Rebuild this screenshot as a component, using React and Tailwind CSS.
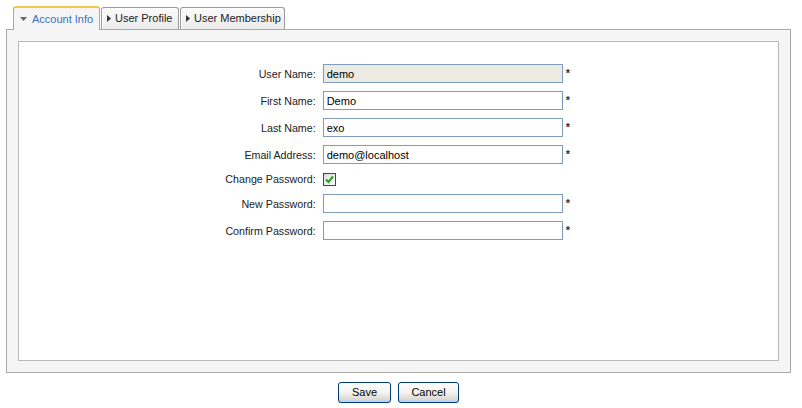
export default function App() {
  const rows = [
    { label: "User Name:", value: "demo", disabled: true, required: true },
    { label: "First Name:", value: "Demo", required: true },
    { label: "Last Name:", value: "exo", required: true },
    { label: "Email Address:", value: "demo@localhost", required: true },
  ];

  return (
    <div className="w-[802px] h-[408px] bg-white font-['Liberation_Sans',Arial,sans-serif] text-[11px] text-[#222]">
      {/* Tabs */}
      <div className="flex items-end gap-[1px] pl-[13px] pt-[5px] h-[29px] relative z-10">
        <div className="h-[24px] w-[87px] -mb-px flex items-center gap-[5px] pl-[6px] rounded-t-[3px] border border-b-0 border-[#a9a9a9] border-t-2 border-t-[#f2c84b] bg-[#f5f5f5] text-[#3d70c0]">
          <svg width="7" height="4" viewBox="0 0 7 4">
            <path d="M0 0 H7 L3.5 4 Z" fill="#666" />
          </svg>
          <span>Account Info</span>
        </div>
        <div className="h-[22px] w-[78px] flex items-center gap-[4px] pl-[5px] rounded-t-[3px] border border-b-0 border-[#9a9a9a] bg-gradient-to-b from-[#fafafa] to-[#ebebeb] shadow-[inset_1px_1px_0_#fff]">
          <svg width="4" height="7" viewBox="0 0 4 7">
            <path d="M0 0 V7 L4 3.5 Z" fill="#333" />
          </svg>
          <span>User Profile</span>
        </div>
        <div className="h-[22px] w-[105px] flex items-center gap-[4px] pl-[5px] rounded-t-[3px] border border-b-0 border-[#9a9a9a] bg-gradient-to-b from-[#fafafa] to-[#ebebeb] shadow-[inset_1px_1px_0_#fff]">
          <svg width="4" height="7" viewBox="0 0 4 7">
            <path d="M0 0 V7 L4 3.5 Z" fill="#333" />
          </svg>
          <span>User Membership</span>
        </div>
      </div>

      {/* Outer panel */}
      <div className="mx-[6px] w-[785px] h-[344px] border border-[#a9a9a9] bg-[#f5f5f5] p-[11px]">
        <div className="h-[320px] border border-[#b8b8b8] bg-white pt-[22px] flex justify-center">
          <div className="grid grid-cols-[auto_240px_auto] gap-x-[7px] gap-y-[8px] items-center ml-[2px] h-fit leading-[14px]">
            {rows.map((r) => (
              <Row key={r.label} label={r.label} required={r.required}>
                <input
                  readOnly
                  value={r.value}
                  className={
                    "h-[19px] w-[240px] border border-[#7f9db9] px-[3px] text-[11px] text-black outline-none font-['Liberation_Sans',Arial,sans-serif] " +
                    (r.disabled ? "bg-[#ebebe4]" : "bg-white")
                  }
                />
              </Row>
            ))}
            <Row label="Change Password:">
              <div className="h-[14px] flex items-center">
                <div className="w-[13px] h-[13px] border border-[#1c5180] bg-gradient-to-br from-[#dcdcd7] to-white flex items-center justify-center">
                  <svg width="9" height="9" viewBox="0 0 9 9">
                    <path d="M1 4.5 L3.5 7 L8 1.5" fill="none" stroke="#21a121" strokeWidth="2" />
                  </svg>
                </div>
              </div>
            </Row>
            <Row label="New Password:" required>
              <input readOnly type="password" className="h-[19px] w-[240px] border border-[#7f9db9] bg-white outline-none" />
            </Row>
            <Row label="Confirm Password:" required>
              <input readOnly type="password" className="h-[19px] w-[240px] border border-[#7f9db9] bg-white outline-none" />
            </Row>
          </div>
        </div>
      </div>

      {/* Buttons */}
      <div className="flex justify-center gap-[7px] mt-[9px] pr-[5px]">
        <button className="h-[21px] w-[53px] rounded-[3px] border border-[#003c74] bg-gradient-to-b from-white via-[#f3f3ef] to-[#d6d0c5] shadow-[inset_0_-2px_0_#c2d3f4] text-[11px] text-black">
          Save
        </button>
        <button className="h-[21px] w-[61px] rounded-[3px] border border-[#003c74] bg-gradient-to-b from-white via-[#f3f3ef] to-[#d6d0c5] shadow-[inset_0_-2px_0_#c2d3f4] text-[11px] text-black">
          Cancel
        </button>
      </div>
    </div>
  );
}

function Row({ label, required, children }) {
  return (
    <>
      <div className="text-right text-[#222] whitespace-nowrap text-[10.7px]">{label}</div>
      {children}
      <div className="w-[8px] -ml-[4px] text-[11px] font-bold leading-none text-[#333]">{required ? "*" : ""}</div>
    </>
  );
}
